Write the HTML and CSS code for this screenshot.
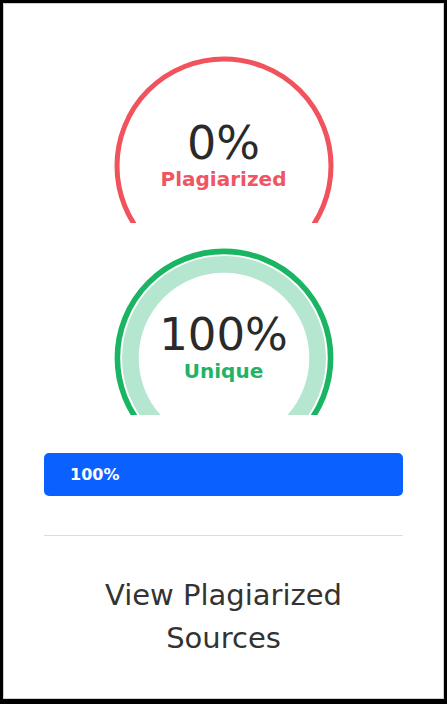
FILE: index.html
```html
<!DOCTYPE html>
<html lang="en">
<head>
<meta charset="utf-8">
<title>Plagiarism Report</title>
<link rel="stylesheet" href="styles.css">
</head>
<body>
<div class="card">
  <div class="gauge">
    <svg class="ring" width="220" height="220" viewBox="0 0 220 220">
      <circle cx="110" cy="110" r="107" fill="none" stroke="#f1535c" stroke-width="5"/>
    </svg>
    <div class="gauge-text">
      <div class="value">0%</div>
      <div class="label label-red">Plagiarized</div>
    </div>
  </div>
  <div class="gauge gauge-second">
    <svg class="ring" width="220" height="220" viewBox="0 0 220 220">
      <circle cx="110" cy="110" r="106.6" fill="none" stroke="#19b562" stroke-width="5.6"/>
      <circle cx="110" cy="110" r="93.6" fill="none" stroke="#b5e6d0" stroke-width="16.6"/>
    </svg>
    <div class="gauge-text">
      <div class="value value-wide">100%</div>
      <div class="label label-green">Unique</div>
    </div>
  </div>
  <div class="bar"><span class="bar-text">100%</span></div>
  <div class="divider"></div>
  <div class="title">View Plagiarized<br>Sources</div>
</div>
</body>
</html>
```
FILE: styles.css
```css
* { box-sizing: border-box; }
html, body { margin: 0; padding: 0; }
body {
  background: #000;
  padding: 3px 3px 5px 3px;
  width: 447px;
  height: 704px;
  font-family: "DejaVu Sans", sans-serif;
}
.card {
  background: #fff;
  border: 1px solid #cfcfcf;
  height: 696px;
  padding: 52px 40px 0 40px;
  display: flex;
  flex-direction: column;
}
.gauge {
  width: 220px;
  height: 167px;
  overflow: hidden;
  align-self: center;
  display: grid;
}
.gauge > * { grid-area: 1 / 1; }
.gauge-second { margin-top: 25px; }
.ring { display: block; }
.gauge-text {
  padding-top: 66px;
  display: flex;
  flex-direction: column;
  align-items: center;
  text-align: center;
}
.value {
  font-size: 46px;
  line-height: 42px;
  color: #2a2a2a;
}
.value-wide {
  font-size: 45px;
}
.label {
  margin-top: 5px;
  font-size: 20px;
  line-height: 20px;
  font-weight: 700;
}
.label-red { color: #ef5563; }
.label-green { color: #23b266; }
.bar {
  margin-top: 38px;
  height: 43px;
  background: #0b61ff;
  border-radius: 5px;
  display: flex;
  align-items: center;
  padding-left: 26px;
}
.bar-text {
  color: #fff;
  font-size: 16px;
  font-weight: 700;
}
.divider {
  margin-top: 39px;
  height: 1px;
  background: #dcdcdc;
}
.title {
  margin-top: 38px;
  text-align: center;
  font-size: 29px;
  line-height: 43px;
  color: #333;
}
```
